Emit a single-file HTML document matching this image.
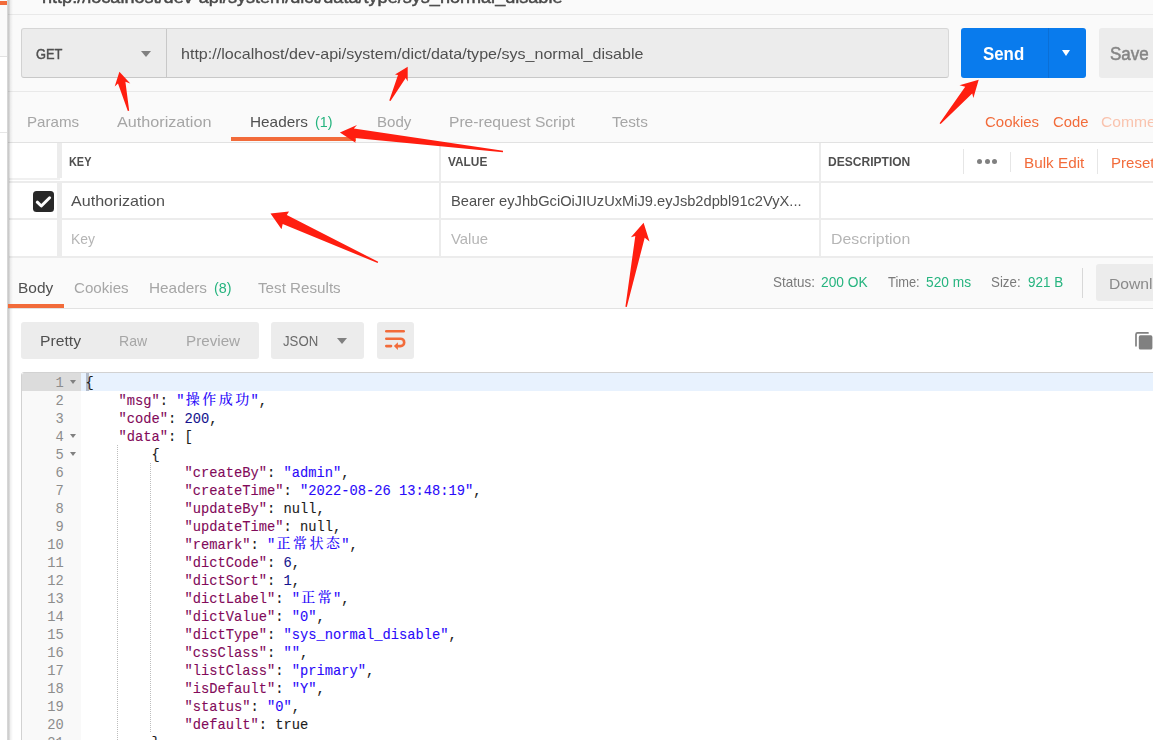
<!DOCTYPE html><html><head><meta charset="utf-8"><title>Postman</title><style>

html,body{margin:0;padding:0;width:1153px;height:740px;overflow:hidden;background:#fafafa}
#root{width:1153px;height:740px;overflow:hidden;position:absolute;left:0;top:0;background:#fafafa;font-family:"Liberation Sans", "Noto Sans CJK SC", sans-serif;-webkit-font-smoothing:antialiased}
.a{position:absolute}
.t{position:absolute;white-space:nowrap;line-height:1;transform-origin:0 0;display:block}
.code{position:absolute;left:85.5px;white-space:pre;font-family:"Liberation Mono", "Noto Sans CJK SC", monospace;font-size:13.75px;line-height:18px;height:18px;color:#1c1c1c;-webkit-text-stroke:0.1px currentColor}
.ln{position:absolute;left:22px;width:41.8px;text-align:right;font-family:"Liberation Mono", "Noto Sans CJK SC", monospace;font-size:13.75px;line-height:18px;height:18px;color:#8c8c8c}
.k{color:#820a5a}.s{color:#2a0afa}.n{color:#14148e}
.cj{display:inline-block;width:16.5px;text-align:center;font-size:14px;line-height:18px;height:18px;vertical-align:top;position:relative;top:-2px;font-family:"Liberation Mono","Noto Serif CJK SC","Noto Sans CJK SC","WenQuanYi Zen Hei",serif;font-weight:500;-webkit-text-stroke:0}
.fold{position:absolute;left:70px;width:0;height:0;border-left:3px solid transparent;border-right:3px solid transparent;border-top:4px solid #808080}
.g{position:absolute;width:1px;background-image:linear-gradient(to bottom,#bdbdbd 50%,rgba(255,255,255,0) 50%);background-size:1px 2px}

</style></head><body><div id="root">
<div class="a" style="left:8px;top:309px;width:1145px;height:431px;background:#ffffff;"></div>
<div class="a" style="left:9px;top:143px;width:1144px;height:113px;background:#ffffff;"></div>
<div class="a" style="left:8px;top:14px;width:1145px;height:1px;background:#e9e9e9;"></div>
<div class="a" style="left:8px;top:91px;width:1145px;height:1px;background:#e9e9e9;"></div>
<div class="a" style="left:8px;top:142px;width:1145px;height:1px;background:#e2e2e2;"></div>
<div class="a" style="left:8px;top:308px;width:1145px;height:1px;background:#e2e2e2;"></div>
<div class="a" style="left:9px;top:181px;width:1144px;height:2px;background:#ececec;"></div>
<div class="a" style="left:9px;top:218px;width:1144px;height:2px;background:#ececec;"></div>
<div class="a" style="left:9px;top:256px;width:1144px;height:2px;background:#ececec;"></div>
<div class="a" style="left:57px;top:143px;width:5px;height:113px;background:#ececec;"></div>
<div class="a" style="left:439px;top:143px;width:2px;height:113px;background:#ececec;"></div>
<div class="a" style="left:9px;top:178px;width:53px;height:3px;background:#ffffff;"></div>
<div class="a" style="left:9px;top:178px;width:51px;height:1.5px;background:#f0f0f0;"></div>
<div class="a" style="left:819px;top:143px;width:2px;height:113px;background:#ececec;"></div>
<div class="a" style="left:963px;top:149px;width:1px;height:25px;background:#e6e6e6;"></div>
<div class="a" style="left:1010px;top:152px;width:1px;height:20px;background:#e6e6e6;"></div>
<div class="a" style="left:1097px;top:149px;width:1px;height:25px;background:#e6e6e6;"></div>
<div class="a" style="left:977.0px;top:158.5px;width:5px;height:5px;background:#808080;border-radius:50%"></div>
<div class="a" style="left:984.6px;top:158.5px;width:5px;height:5px;background:#808080;border-radius:50%"></div>
<div class="a" style="left:992.2px;top:158.5px;width:5px;height:5px;background:#808080;border-radius:50%"></div>
<div class="a" style="left:0px;top:0px;width:7px;height:740px;background:#ffffff;"></div>
<div class="a" style="left:0px;top:0px;width:7px;height:56px;background:#fafafa;"></div>
<div class="a" style="left:0px;top:56px;width:7px;height:1px;background:#e2e2e2;"></div>
<div class="a" style="left:0px;top:132px;width:7px;height:1px;background:#e6e6e6;"></div>
<div class="a" style="left:0px;top:1px;width:7px;height:4px;background:#f26b3a;"></div>
<div class="a" style="left:7px;top:0;width:6px;height:740px;background:linear-gradient(to right,rgba(0,0,0,0.09) 0,rgba(0,0,0,0.20) 1px,rgba(0,0,0,0.18) 2px,rgba(0,0,0,0.06) 3.5px,rgba(0,0,0,0) 6px)"></div>
<div class="a" style="left:21px;top:28px;width:926px;height:48px;background:#ececec;border:1px solid #d2d2d2;border-top-color:#d6d6d6;border-right-color:#d8d8d8;border-bottom:1px solid #c8c8c8;border-radius:3px"></div>
<div class="a" style="left:166px;top:29px;width:1px;height:48px;background:#c8c8c8;"></div>
<div class="a" style="left:141px;top:50.5px;width:0;height:0;border-left:5px solid transparent;border-right:5px solid transparent;border-top:6.5px solid #808080"></div>
<div class="a" style="left:961px;top:28px;width:125px;height:50px;background:#097bed;border-radius:3px"></div>
<div class="a" style="left:1048px;top:28px;width:1px;height:50px;background:#0a6fd6;"></div>
<div class="a" style="left:1061.5px;top:50.3px;width:0;height:0;border-left:4.7px solid transparent;border-right:4.7px solid transparent;border-top:6.3px solid #ffffff"></div>
<div class="a" style="left:1099px;top:28px;width:70px;height:50px;background:#ececec;border-radius:3px"></div>
<div class="a" style="left:231px;top:137px;width:125px;height:4px;background:#f26b3a;"></div>
<div class="a" style="left:8px;top:304px;width:56px;height:4px;background:#f26b3a;"></div>
<div class="a" style="left:33px;top:191px;width:21px;height:21px;background:#282828;border-radius:3.5px"></div>
<svg class="a" style="left:33px;top:191px" width="21" height="21" viewBox="0 0 21 21"><path d="M4.3 11.2 L8.3 15 L16.6 6.8" fill="none" stroke="#ffffff" stroke-width="3" stroke-linecap="round" stroke-linejoin="round"/></svg>
<div class="a" style="left:1082px;top:268px;width:1px;height:30px;background:#d8d8d8;"></div>
<div class="a" style="left:1096px;top:264px;width:70px;height:37px;background:#ececec;border-radius:3px"></div>
<div class="a" style="left:21px;top:322px;width:238px;height:37px;background:#ececec;border-radius:3px"></div>
<div class="a" style="left:271px;top:322px;width:93px;height:37px;background:#ececec;border-radius:3px"></div>
<div class="a" style="left:377px;top:322px;width:37px;height:37px;background:#ececec;border-radius:3px"></div>
<div class="a" style="left:337px;top:337.6px;width:0;height:0;border-left:5px solid transparent;border-right:5px solid transparent;border-top:6px solid #808080"></div>
<svg class="a" style="left:377px;top:322px" width="37" height="37" viewBox="0 0 37 37" fill="none" stroke="#f26b3a" stroke-width="2.6" stroke-linecap="round"><path d="M9.3 9.2 H26.7"/><path d="M9.3 16.7 H23.5 A3.7 3.7 0 0 1 23.5 24.1 H21"/><path d="M9.3 24.1 H14"/><path d="M20.9 20.3 L16.9 24.1 L20.9 27.9 Z" fill="#f26b3a" stroke="none"/></svg>
<svg class="a" style="left:1130px;top:328px" width="23" height="24" viewBox="1130 328 23 24"><path d="M1148 332.9 H1137.6 Q1136 332.9 1136 334.5 V345.8" fill="none" stroke="#808080" stroke-width="1.7" stroke-linecap="round"/><rect x="1138.8" y="335.3" width="13.6" height="14.2" rx="1.6" fill="#808080"/></svg>
<div class="a" style="left:21px;top:372px;width:1140px;height:380px;border:1px solid #d2d2d2;border-radius:3px 0 0 0;background:#ffffff"></div>
<div class="a" style="left:22px;top:373px;width:59px;height:367px;background:#f9f9f9;"></div>
<div class="a" style="left:22px;top:373px;width:59px;height:18px;background:#dcdcdc;border-radius:2px 0 0 0"></div>
<div class="a" style="left:81px;top:373px;width:1072px;height:18px;background:#e8f2fe;"></div>
<div class="a" style="left:86px;top:373px;width:3px;height:18px;background:#b3bccb;"></div>
<div class="ln" style="top:375px">1</div>
<div class="fold" style="top:380.3px"></div>
<div class="code" style="top:375px">{</div>
<div class="ln" style="top:393px">2</div>
<div class="code" style="top:393px">    <span class="k">"msg"</span>: <span class="s">"<span class="cj">操</span><span class="cj">作</span><span class="cj">成</span><span class="cj">功</span>"</span>,</div>
<div class="ln" style="top:411px">3</div>
<div class="code" style="top:411px">    <span class="k">"code"</span>: <span class="n">200</span>,</div>
<div class="ln" style="top:429px">4</div>
<div class="fold" style="top:434.3px"></div>
<div class="code" style="top:429px">    <span class="k">"data"</span>: [</div>
<div class="ln" style="top:447px">5</div>
<div class="fold" style="top:452.3px"></div>
<div class="code" style="top:447px">        {</div>
<div class="ln" style="top:465px">6</div>
<div class="code" style="top:465px">            <span class="k">"createBy"</span>: <span class="s">"admin"</span>,</div>
<div class="ln" style="top:483px">7</div>
<div class="code" style="top:483px">            <span class="k">"createTime"</span>: <span class="s">"2022-08-26 13:48:19"</span>,</div>
<div class="ln" style="top:501px">8</div>
<div class="code" style="top:501px">            <span class="k">"updateBy"</span>: null,</div>
<div class="ln" style="top:519px">9</div>
<div class="code" style="top:519px">            <span class="k">"updateTime"</span>: null,</div>
<div class="ln" style="top:537px">10</div>
<div class="code" style="top:537px">            <span class="k">"remark"</span>: <span class="s">"<span class="cj">正</span><span class="cj">常</span><span class="cj">状</span><span class="cj">态</span>"</span>,</div>
<div class="ln" style="top:555px">11</div>
<div class="code" style="top:555px">            <span class="k">"dictCode"</span>: <span class="n">6</span>,</div>
<div class="ln" style="top:573px">12</div>
<div class="code" style="top:573px">            <span class="k">"dictSort"</span>: <span class="n">1</span>,</div>
<div class="ln" style="top:591px">13</div>
<div class="code" style="top:591px">            <span class="k">"dictLabel"</span>: <span class="s">"<span class="cj">正</span><span class="cj">常</span>"</span>,</div>
<div class="ln" style="top:609px">14</div>
<div class="code" style="top:609px">            <span class="k">"dictValue"</span>: <span class="s">"0"</span>,</div>
<div class="ln" style="top:627px">15</div>
<div class="code" style="top:627px">            <span class="k">"dictType"</span>: <span class="s">"sys_normal_disable"</span>,</div>
<div class="ln" style="top:645px">16</div>
<div class="code" style="top:645px">            <span class="k">"cssClass"</span>: <span class="s">""</span>,</div>
<div class="ln" style="top:663px">17</div>
<div class="code" style="top:663px">            <span class="k">"listClass"</span>: <span class="s">"primary"</span>,</div>
<div class="ln" style="top:681px">18</div>
<div class="code" style="top:681px">            <span class="k">"isDefault"</span>: <span class="s">"Y"</span>,</div>
<div class="ln" style="top:699px">19</div>
<div class="code" style="top:699px">            <span class="k">"status"</span>: <span class="s">"0"</span>,</div>
<div class="ln" style="top:717px">20</div>
<div class="code" style="top:717px">            <span class="k">"default"</span>: true</div>
<div class="ln" style="top:735px">21</div>
<div class="code" style="top:735px">        },</div>
<div class="g" style="left:117px;top:445px;height:295px"></div>
<div class="g" style="left:150px;top:463px;height:270px"></div>
<div class="a" style="left:0;top:0;width:1153px;height:740px;will-change:transform">
<div class="t" id="t0" style="left:41.5px;top:-11.00px;font-size:16.25px;font-weight:400;color:#484848;transform:scaleX(1.1124);-webkit-text-stroke:0.45px #484848;">http://localhost/dev-api/system/dict/data/type/sys_normal_disable</div>
<div class="t" id="t1" style="left:35.8px;top:47.00px;font-size:14px;font-weight:400;color:#505050;transform:scaleX(0.9173);-webkit-text-stroke:0.45px #505050;">GET</div>
<div class="t" id="t2" style="left:180.6px;top:46.00px;font-size:15px;font-weight:400;color:#505050;transform:scaleX(1.0706);">http://localhost/dev-api/system/dict/data/type/sys_normal_disable</div>
<div class="t" id="t3" style="left:983.4px;top:46.00px;font-size:17.5px;font-weight:700;color:#ffffff;transform:scaleX(0.9627);">Send</div>
<div class="t" id="t4" style="left:1110px;top:46.00px;font-size:17.5px;font-weight:400;color:#858585;transform:scaleX(0.9727);-webkit-text-stroke:0.5px #858585;">Save</div>
<div class="t" id="t5" style="left:27.2px;top:114.00px;font-size:15px;font-weight:400;color:#a6a6a6;transform:scaleX(1.0080);">Params</div>
<div class="t" id="t6" style="left:117.3px;top:114.00px;font-size:15px;font-weight:400;color:#a6a6a6;transform:scaleX(1.0781);">Authorization</div>
<div class="t" id="t7" style="left:250.3px;top:114.00px;font-size:15px;font-weight:400;color:#505050;transform:scaleX(1.0229);">Headers</div>
<div class="t" id="t8" style="left:314.5px;top:114.00px;font-size:15px;font-weight:400;color:#26b47f;transform:scaleX(0.9540);">(1)</div>
<div class="t" id="t9" style="left:376.6px;top:114.00px;font-size:15px;font-weight:400;color:#a6a6a6;transform:scaleX(1.0058);">Body</div>
<div class="t" id="t10" style="left:449.1px;top:114.00px;font-size:15px;font-weight:400;color:#a6a6a6;transform:scaleX(1.0406);">Pre-request Script</div>
<div class="t" id="t11" style="left:612.4px;top:114.00px;font-size:15px;font-weight:400;color:#a6a6a6;transform:scaleX(1.0224);">Tests</div>
<div class="t" id="t12" style="left:985.1px;top:114.00px;font-size:15px;font-weight:400;color:#f26b3a;transform:scaleX(0.9981);">Cookies</div>
<div class="t" id="t13" style="left:1052.6px;top:114.00px;font-size:15px;font-weight:400;color:#f26b3a;transform:scaleX(0.9872);">Code</div>
<div class="t" id="t14" style="left:1100.6px;top:114.00px;font-size:15px;font-weight:400;color:#f9c3ae;transform:scaleX(1.0409);">Comments</div>
<div class="t" id="t15" style="left:68.7px;top:156.00px;font-size:12.5px;font-weight:700;color:#505050;transform:scaleX(0.8715);">KEY</div>
<div class="t" id="t16" style="left:448.4px;top:156.00px;font-size:12.5px;font-weight:700;color:#505050;transform:scaleX(0.9484);">VALUE</div>
<div class="t" id="t17" style="left:827.8px;top:156.00px;font-size:12.5px;font-weight:700;color:#505050;transform:scaleX(0.9633);">DESCRIPTION</div>
<div class="t" id="t18" style="left:1023.9px;top:155.00px;font-size:15px;font-weight:400;color:#f26b3a;transform:scaleX(1.0185);">Bulk Edit</div>
<div class="t" id="t19" style="left:1110.8px;top:155.00px;font-size:15px;font-weight:400;color:#f26b3a;transform:scaleX(1.0028);">Presets</div>
<div class="t" id="t20" style="left:70.9px;top:193.00px;font-size:15px;font-weight:400;color:#505050;transform:scaleX(1.0735);">Authorization</div>
<div class="t" id="t21" style="left:450.8px;top:193.00px;font-size:15px;font-weight:400;color:#505050;transform:scaleX(0.9772);">Bearer eyJhbGciOiJIUzUxMiJ9.eyJsb2dpbl91c2VyX...</div>
<div class="t" id="t22" style="left:71.4px;top:231.00px;font-size:15px;font-weight:400;color:#b5b5b5;transform:scaleX(0.9281);">Key</div>
<div class="t" id="t23" style="left:451.0px;top:231.00px;font-size:15px;font-weight:400;color:#b5b5b5;transform:scaleX(0.9929);">Value</div>
<div class="t" id="t24" style="left:830.5px;top:231.00px;font-size:15px;font-weight:400;color:#b5b5b5;transform:scaleX(1.0556);">Description</div>
<div class="t" id="t25" style="left:18.2px;top:280.00px;font-size:15px;font-weight:400;color:#505050;transform:scaleX(1.0291);">Body</div>
<div class="t" id="t26" style="left:73.7px;top:280.00px;font-size:15px;font-weight:400;color:#a6a6a6;transform:scaleX(1.0092);">Cookies</div>
<div class="t" id="t27" style="left:149.2px;top:280.00px;font-size:15px;font-weight:400;color:#a6a6a6;transform:scaleX(1.0229);">Headers</div>
<div class="t" id="t28" style="left:213.5px;top:280.00px;font-size:15px;font-weight:400;color:#26b47f;transform:scaleX(0.9540);">(8)</div>
<div class="t" id="t29" style="left:257.7px;top:280.00px;font-size:15px;font-weight:400;color:#a6a6a6;transform:scaleX(1.0122);">Test Results</div>
<div class="t" id="t30" style="left:772.6px;top:276.00px;font-size:13.75px;font-weight:400;color:#7a7a7a;transform:scaleX(0.9787);">Status:</div>
<div class="t" id="t31" style="left:821.3px;top:276.00px;font-size:13.75px;font-weight:400;color:#26b47f;transform:scaleX(1.0013);">200 OK</div>
<div class="t" id="t32" style="left:887.8px;top:276.00px;font-size:13.75px;font-weight:400;color:#7a7a7a;transform:scaleX(0.9358);">Time:</div>
<div class="t" id="t33" style="left:926.3px;top:276.00px;font-size:13.75px;font-weight:400;color:#26b47f;transform:scaleX(0.9979);">520 ms</div>
<div class="t" id="t34" style="left:991.1px;top:276.00px;font-size:13.75px;font-weight:400;color:#7a7a7a;transform:scaleX(0.9680);">Size:</div>
<div class="t" id="t35" style="left:1027.6px;top:276.00px;font-size:13.75px;font-weight:400;color:#26b47f;transform:scaleX(0.9767);">921 B</div>
<div class="t" id="t36" style="left:1109.1px;top:276.00px;font-size:15px;font-weight:400;color:#8a8a8a;transform:scaleX(1.0432);">Download</div>
<div class="t" id="t37" style="left:40.0px;top:333.00px;font-size:15px;font-weight:400;color:#505050;transform:scaleX(1.0463);">Pretty</div>
<div class="t" id="t38" style="left:119.4px;top:333.00px;font-size:15px;font-weight:400;color:#a6a6a6;transform:scaleX(0.9362);">Raw</div>
<div class="t" id="t39" style="left:185.9px;top:333.00px;font-size:15px;font-weight:400;color:#a6a6a6;transform:scaleX(1.0139);">Preview</div>
<div class="t" id="t40" style="left:283.3px;top:333.00px;font-size:15px;font-weight:400;color:#6a6a6a;transform:scaleX(0.8797);">JSON</div>
</div>
<svg class="a" style="left:0;top:0" width="1153" height="740" viewBox="0 0 1153 740">
<polygon fill="#ff1e10" points="119.4,71.8 130.3,83.5 125.4,81.7 129.18,110.74 127.82,111.06 118,83.5 114.7,86.4"/>
<polygon fill="#ff1e10" points="407.7,66.8 407.7,81.4 405.7,78.1 390.52,101.12 389.28,100.48 398,74.9 395,74.5"/>
<polygon fill="#ff1e10" points="978.7,79.7 973.4,98.1 972.2,93.6 940.63,124.06 939.57,123.14 965.2,86.7 959.5,85.3"/>
<polygon fill="#ff1e10" points="339.9,132.4 357,125 353.8,128.4 503.08,150.8 502.92,152.2 354.7,138 355.6,142.8"/>
<polygon fill="#ff1e10" points="270.5,213.6 289,211.4 286.8,215 378.19,261.76 377.61,263.04 282.7,224.1 281.5,229.2"/>
<polygon fill="#ff1e10" points="643.6,222.8 649.5,241.4 644.7,237.7 626.79,307.04 625.41,306.76 635.3,235.9 630.9,237.3"/>
</svg>
</div></body></html>
